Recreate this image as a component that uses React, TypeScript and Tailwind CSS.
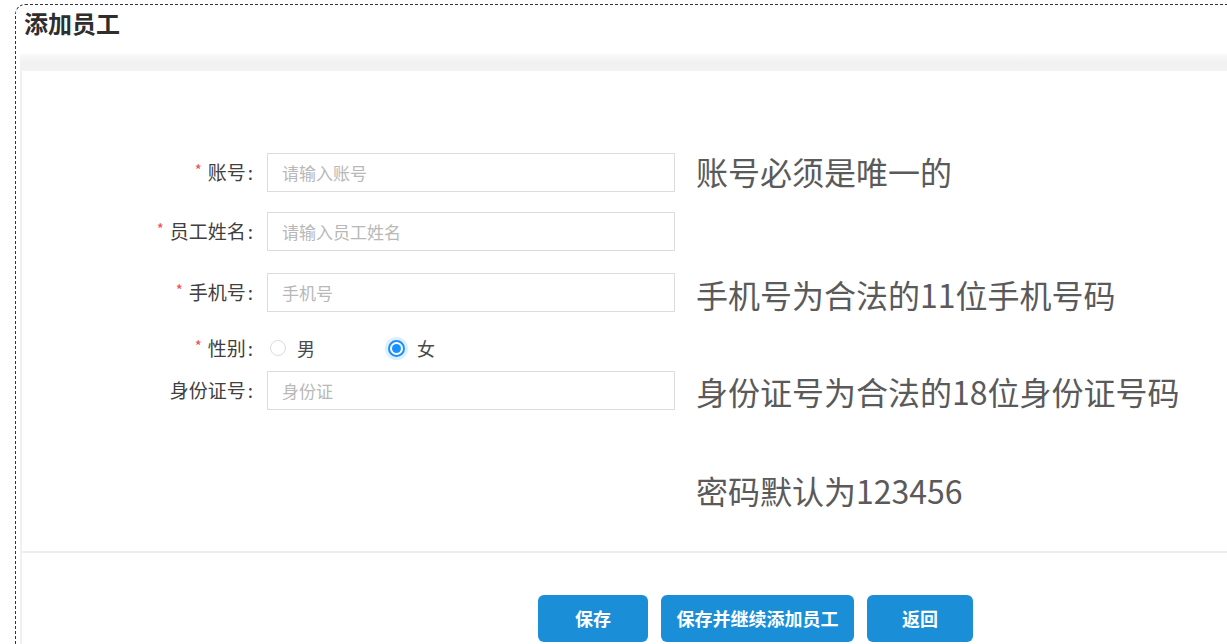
import React from "react";

const font = { fontFamily: '"Noto Sans CJK SC", "Noto Sans", sans-serif' };

function Label({ text, required }: { text: string; required?: boolean }) {
  return (
    <div className="w-[231px] shrink-0 flex items-center justify-end text-[19px] text-[#404040]">
      {required && <span className="text-[#f5484f] text-[15px] mr-[6px] -mt-[4px]">*</span>}
      <span>{text}</span>
      <span className="ml-[2px]">:</span>
    </div>
  );
}

function Input({ placeholder }: { placeholder: string }) {
  return (
    <div className="ml-[14px] w-[408px] h-[39px] shrink-0 border border-[#dcdcdc] bg-white flex items-center pl-[14px] text-[17px] text-[#b8b8b8]">
      {placeholder}
    </div>
  );
}

function Hint({ text }: { text: string }) {
  return <div className="ml-[21px] text-[32px] leading-[40px] text-[#5a5a5a] whitespace-nowrap">{text}</div>;
}

export default function App() {
  return (
    <div className="w-[1227px] h-[644px] overflow-hidden bg-white" style={font}>
      <div className="ml-[15px] mt-[4px] w-[1260px] h-[700px] border-l border-t border-dashed border-[#333] rounded-tl-[10px]">
        <div className="h-[49px] pl-[8px] pt-[2px] text-[24px] font-bold text-[#2e2e2e] leading-[32px]">添加员工</div>
        <div className="ml-[4px] h-[17px] bg-gradient-to-b from-[#fafafa] via-[#f1f1f1] to-[#f3f3f3]"></div>
        <div className="ml-[4px] border-l-2 border-[#f0f0f0] h-[700px]">
          <div className="pt-[82px]">
            <div className="flex items-center h-[39px]">
              <Label text="账号" required />
              <Input placeholder="请输入账号" />
              <div className="-mt-[4px]"><Hint text="账号必须是唯一的" /></div>
            </div>
            <div className="flex items-center h-[39px] mt-[20px]">
              <Label text="员工姓名" required />
              <Input placeholder="请输入员工姓名" />
            </div>
            <div className="flex items-center h-[39px] mt-[22px]">
              <Label text="手机号" required />
              <Input placeholder="手机号" />
              <div className="mt-[2px]"><Hint text="手机号为合法的11位手机号码" /></div>
            </div>
            <div className="flex items-center h-[24px] mt-[24px]">
              <Label text="性别" required />
              <div className="ml-[17px] flex items-center w-[118px]">
                <span className="w-[16px] h-[16px] rounded-full border border-[#dcdcdc] bg-white"></span>
                <span className="ml-[11px] text-[18px] text-[#4a4a4a]">男</span>
              </div>
              <div className="flex items-center">
                <span className="w-[17px] h-[17px] rounded-full border-2 border-[#1890ff] bg-white flex items-center justify-center shadow-[0_0_0_3px_rgba(24,144,255,0.15)]">
                  <span className="w-[9px] h-[9px] rounded-full bg-[#1890ff]"></span>
                </span>
                <span className="ml-[12px] text-[18px] text-[#4a4a4a]">女</span>
              </div>
            </div>
            <div className="flex items-center h-[39px] mt-[11px]">
              <Label text="身份证号" />
              <Input placeholder="身份证" />
              <div className="mt-[0px]"><Hint text="身份证号为合法的18位身份证号码" /></div>
            </div>
            <div className="flex items-center h-[40px] mt-[60px]">
              <div className="w-[653px] shrink-0"></div>
              <Hint text="密码默认为123456" />
            </div>
          </div>
          <div className="mt-[41px] h-[2px] bg-[#ededed]"></div>
          <div className="mt-[42px] pl-[516px] flex gap-[13px]">
            <button className="w-[110px] h-[47px] rounded-[6px] bg-[#1a8fd8] text-white text-[18px] font-bold">保存</button>
            <button className="w-[193px] h-[47px] rounded-[6px] bg-[#1a8fd8] text-white text-[18px] font-bold">保存并继续添加员工</button>
            <button className="w-[106px] h-[47px] rounded-[6px] bg-[#1a8fd8] text-white text-[18px] font-bold">返回</button>
          </div>
        </div>
      </div>
    </div>
  );
}
